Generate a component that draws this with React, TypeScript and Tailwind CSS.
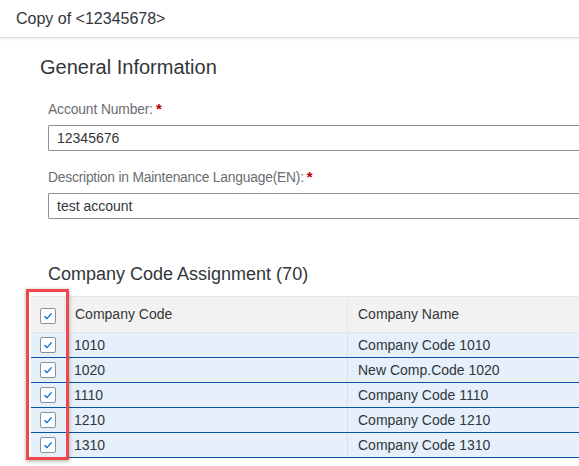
import React from "react";

const rows = [
  { code: "1010", name: "Company Code 1010" },
  { code: "1020", name: "New Comp.Code 1020" },
  { code: "1110", name: "Company Code 1110" },
  { code: "1210", name: "Company Code 1210" },
  { code: "1310", name: "Company Code 1310" },
];

function Check() {
  return (
    <div className="w-[16px] h-[16px] border border-[#89919a] rounded-[2px] bg-white flex items-center justify-center">
      <svg width="10" height="10" viewBox="0 0 10 10">
        <path d="M1.5 5.2 L4 7.6 L8.6 2.4" fill="none" stroke="#0a6ed1" strokeWidth="1.4" />
      </svg>
    </div>
  );
}

export default function App() {
  return (
    <div
      className="w-[579px] h-[466px] overflow-hidden bg-white relative text-[#32363a]"
      style={{ fontFamily: '"Liberation Sans", Arial, sans-serif' }}
    >
      <div className="h-[38px] flex items-center px-[16px] text-[16px] border-b border-[#d9d9d9] shadow-[0_1px_3px_rgba(0,0,0,0.08)]">
        Copy of &lt;12345678&gt;
      </div>

      <div className="pl-[40px] pt-[17px] text-[20px] leading-[24px]">General Information</div>

      <div className="pl-[48px]">
        <div className="mt-[23px] h-[16px] text-[13.8px] leading-[16px] text-[#6a6d70] tracking-[-0.1px]">
          Account Number:<span className="text-[#bb0000] ml-[3px] font-bold text-[15px] leading-[0]">*</span>
        </div>
        <div className="mt-[7px] h-[26px] border border-[#89919a] rounded-l-[2px] border-r-0 flex items-center px-[8px] text-[14px]">
          12345676
        </div>
        <div className="mt-[19px] h-[16px] text-[13.8px] leading-[16px] text-[#6a6d70] tracking-[-0.2px]">
          Description in Maintenance Language(EN):<span className="text-[#bb0000] ml-[3px] font-bold text-[15px] leading-[0]">*</span>
        </div>
        <div className="mt-[7px] h-[26px] border border-[#89919a] rounded-l-[2px] border-r-0 flex items-center px-[8px] text-[14px]">
          test account
        </div>
        <div className="mt-[44px] text-[18px] leading-[22px]">Company Code Assignment (70)</div>
      </div>

      <div className="ml-[31px] mt-[11px] w-[560px]">
        <div className="flex h-[37px] bg-[#f2f2f2] border-t border-b border-[#e5e5e5] text-[14px] text-[#32363a]">
          <div className="w-[33px] flex items-center justify-center pl-[1px] pt-[2px]">
            <Check />
          </div>
          <div className="w-[283px] flex items-center pl-[10px] border-l border-[#e5e5e5]">Company Code</div>
          <div className="flex-1 flex items-center pl-[10px] border-l border-[#e5e5e5]">Company Name</div>
        </div>
        {rows.map((r) => (
          <div key={r.code} className="flex h-[25px] bg-[#e5f0fa] border-b border-[#0854a0] text-[14px]">
            <div className="w-[33px] flex items-center justify-center pl-[1px]">
              <Check />
            </div>
            <div className="w-[283px] flex items-center pl-[10px]">{r.code}</div>
            <div className="flex-1 flex items-center pl-[10px] border-l border-[#d5e2ef]">{r.name}</div>
          </div>
        ))}
      </div>

      <div className="absolute left-[26px] top-[289px] w-[43px] h-[171px] border-[3px] border-[#f2474a] shadow-[0_1px_4px_rgba(0,0,0,0.35)] pointer-events-none" />
    </div>
  );
}
